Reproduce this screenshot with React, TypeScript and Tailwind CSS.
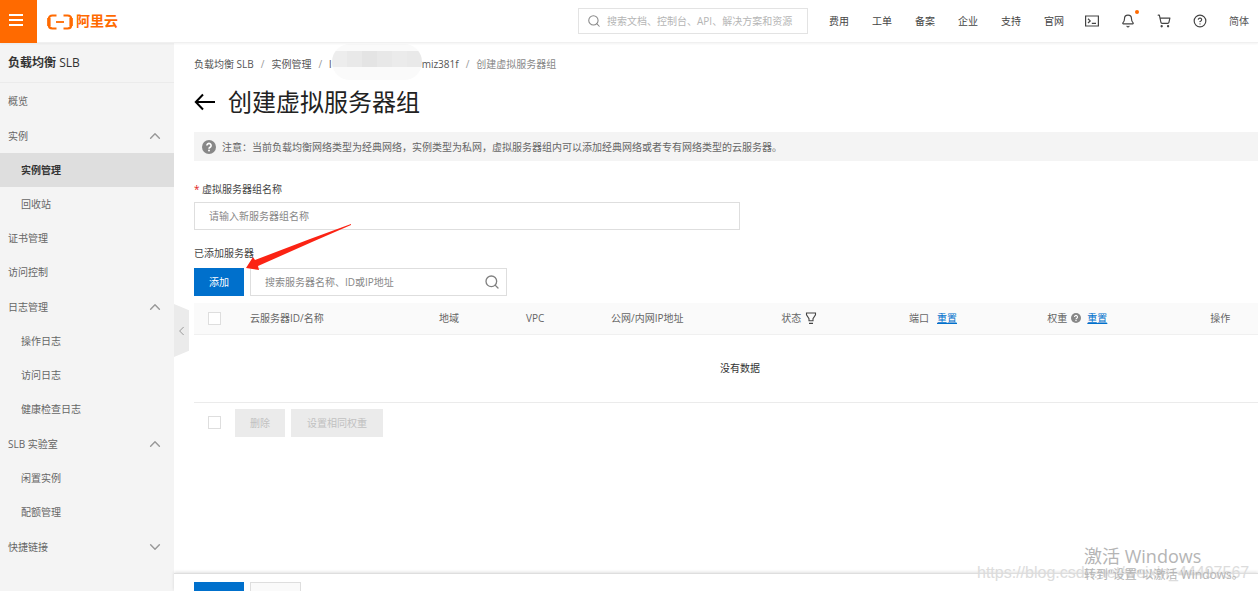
import { useState } from "react";
import { Bell, ChevronDown, ChevronLeft, ChevronUp, CircleHelp, Search, ShoppingCart } from "lucide-react";

const topLinks = ["费用", "工单", "备案", "企业", "支持", "官网"];

const menu = [
  { label: "概览" },
  { label: "实例", open: true, children: ["实例管理", "回收站"] },
  { label: "证书管理" },
  { label: "访问控制" },
  { label: "日志管理", open: true, children: ["操作日志", "访问日志", "健康检查日志"] },
  { label: "SLB 实验室", open: true, children: ["闲置实例", "配额管理"] },
  { label: "快捷链接", open: false, children: ["访问日志"] },
];

const checkboxClass = "block size-[13px] appearance-none border border-[#dedede] bg-white checked:bg-[#0070cc]";

function Logo() {
  return (
    <a href="#" aria-label="阿里云" className="ml-2.5 flex items-center gap-[3px] text-[#ff6a00]">
      <svg viewBox="0 0 26 16" className="mt-px h-4 w-[26px]" fill="none" stroke="currentColor">
        <path d="M9.5 1.5H5.4C3.1 1.5 1.8 2.8 1.8 5v6c0 2.2 1.3 3.5 3.6 3.5h4.1" strokeWidth="2.2" />
        <path d="M16.5 1.5h4.1c2.3 0 3.6 1.3 3.6 3.5v6c0 2.2-1.3 3.5-3.6 3.5h-4.1" strokeWidth="2.2" />
        <path d="M1.9 4v8M24.1 4v8" strokeWidth="3.4" />
        <path d="M9 8h8" strokeWidth="1.8" />
      </svg>
      <span className="text-sm font-bold">阿里云</span>
    </a>
  );
}

function HelpDot({ className }: { className: string }) {
  return (
    <svg viewBox="0 0 14 14" className={className}>
      <circle cx="7" cy="7" r="7" fill="#888" />
      <path d="M4.9 5.5a2.1 2.1 0 1 1 3.2 1.8c-.8.5-1.1.8-1.1 1.5" fill="none" stroke="#fff" strokeWidth="1.6" />
      <circle cx="7" cy="10.6" r="1" fill="#fff" />
    </svg>
  );
}

function Header() {
  return (
    <header className="relative z-10 flex h-[43px] shrink-0 items-center border-b border-[#f0f0f0] bg-white shadow-xs">
      <button aria-label="菜单" className="flex h-[43px] w-[37px] items-center justify-center bg-[#ff6a00]">
        <svg viewBox="0 0 14 14" className="mr-1.5 size-3.5" stroke="#fff" strokeWidth="2">
          <path d="M0 1h14M0 6h14M0 11h14" />
        </svg>
      </button>
      <Logo />
      <label className="ml-auto flex h-[26px] w-[230px] items-center gap-1.5 border border-[#e3e3e3] pl-2">
        <Search className="size-3.5 text-[#888]" strokeWidth={1.8} />
        <input
          aria-label="搜索"
          className="min-w-0 flex-1 outline-none placeholder:text-[#b5b5b5]"
          placeholder="搜索文档、控制台、API、解决方案和资源"
        />
      </label>
      <nav className="ml-[21px] flex items-center gap-[23px] text-[#444]">
        {topLinks.map((label) => (
          <a key={label} href="#">{label}</a>
        ))}
      </nav>
      <div className="ml-[21px] mr-[9px] flex items-center gap-[22px] text-[#444]">
        <button aria-label="Cloud Shell">
          <svg viewBox="0 0 14 14" className="size-3.5" fill="none" stroke="currentColor" strokeWidth="1.2">
            <path d="M.6 2h12.8v10H.6zM3 4.8l2.2 2.1L3 9M6.8 9.4H11" />
          </svg>
        </button>
        <button aria-label="消息" className="relative">
          <Bell className="size-3.5" strokeWidth={2} />
          <span className="absolute -right-1 -top-1 size-1 rounded-full bg-[#ff6a00]" />
        </button>
        <button aria-label="购物车">
          <ShoppingCart className="size-3.5" strokeWidth={2} />
        </button>
        <button aria-label="帮助">
          <CircleHelp className="size-3.5" strokeWidth={2} />
        </button>
        <a href="#" className="text-[#555]">简体</a>
      </div>
    </header>
  );
}

function Sidebar() {
  const [active, setActive] = useState("实例管理");
  const [open, setOpen] = useState(menu.filter((m) => m.open).map((m) => m.label));

  const toggle = (label: string) => {
    setOpen(open.includes(label) ? open.filter((l) => l !== label) : [...open, label]);
  };

  return (
    <aside className="w-[174px] shrink-0 overflow-hidden bg-[#f4f4f4] text-[#666]">
      <h2 className="flex h-10 items-center border-b border-[#ebebeb] pl-2 pt-px text-xs font-bold text-[#333]">
        负载均衡&nbsp;<span className="font-medium">SLB</span>
      </h2>
      <nav className="pt-px">
        {menu.map((item) => {
          if (!item.children) {
            return (
              <a key={item.label} href="#" className="flex h-[34px] items-center pl-2">{item.label}</a>
            );
          }
          const isOpen = open.includes(item.label);
          const Chevron = isOpen ? ChevronUp : ChevronDown;
          return (
            <div key={item.label}>
              <button
                className="flex h-[35px] w-full items-center justify-between pl-2 pr-3"
                onClick={() => toggle(item.label)}
              >
                {item.label}
                <Chevron className="size-3.5 scale-125 text-[#999]" strokeWidth={2} />
              </button>
              {isOpen && item.children.map((child) => (
                <a
                  key={child}
                  href="#"
                  onClick={() => setActive(child)}
                  className={`flex h-[34px] items-center pl-[21px] ${
                    active === child ? "bg-[#dedede] font-bold text-[#333]" : ""
                  }`}
                >
                  {child}
                </a>
              ))}
            </div>
          );
        })}
      </nav>
    </aside>
  );
}

function Breadcrumb() {
  return (
    <nav className="flex items-center gap-[7px] pt-[13px] leading-4 text-[#555]">
      <a href="#">负载均衡 SLB</a>
      <span className="text-[#999]">/</span>
      <a href="#">实例管理</a>
      <span className="text-[#999]">/</span>
      <a href="#" className="relative flex">
        <span>l</span>
        <span className="w-[90px]" />
        <span>miz381f</span>
        <span className="absolute -top-3 left-[3px] flex h-9 w-[90px] flex-col overflow-hidden rounded-[18px] bg-[#fafafa]">
          <span className="mt-[7px] flex h-4">
            <span className="flex-1 bg-[#ededed]" />
            <span className="flex-1 bg-[#e9e9e9]" />
            <span className="flex-1 bg-[#e4e4e4]" />
            <span className="flex-1 bg-[#e8e8e8]" />
            <span className="flex-1 bg-[#ebebeb]" />
            <span className="flex-1 bg-[#e9e9e9]" />
          </span>
        </span>
      </a>
      <span className="text-[#999]">/</span>
      <span className="text-[#888]">创建虚拟服务器组</span>
    </nav>
  );
}

function ServerTable() {
  return (
    <table className="mt-[7px] w-full table-fixed text-left text-[#666]">
      <thead>
        <tr className="h-[31px] border-b border-[#f0f0f0] bg-[#fafafa] [&>th]:font-normal">
          <th className="w-14 pl-3.5">
            <input type="checkbox" aria-label="全选" className={checkboxClass} />
          </th>
          <th className="w-[189px]">云服务器ID/名称</th>
          <th className="w-[87px]">地域</th>
          <th className="w-[8%]">VPC</th>
          <th className="w-[16%]">公网/内网IP地址</th>
          <th className="w-[12%]">
            <div className="flex items-center gap-1">
              状态
              <button aria-label="筛选状态">
                <svg viewBox="0 0 12 12" className="size-3" fill="none" stroke="#444" strokeWidth="1.1">
                  <path d="M1.5 1h9v1.8L8 6.6v2.2H4V6.6L1.5 2.8zM4 11.4h4" />
                </svg>
              </button>
            </div>
          </th>
          <th className="w-[13%]">
            <div className="flex items-center gap-2">
              端口
              <a href="#" className="text-[#0070cc] underline">重置</a>
            </div>
          </th>
          <th className="w-[163px]">
            <div className="flex items-center gap-1">
              权重
              <HelpDot className="size-2.5" />
              <a href="#" className="ml-0.5 text-[#0070cc] underline">重置</a>
            </div>
          </th>
          <th>操作</th>
        </tr>
      </thead>
      <tbody>
        <tr className="h-[68px] border-b border-[#ebebeb]">
          <td colSpan={9} className="pl-7 text-center text-[#333]">没有数据</td>
        </tr>
      </tbody>
    </table>
  );
}

function Watermarks() {
  return (
    <div className="pointer-events-none absolute bottom-0 right-2.5 z-20 h-[50px] w-[271px]">
      <p className="absolute left-0 top-[22px] whitespace-nowrap font-['Liberation_Sans',sans-serif] text-base leading-5 text-[#dcdcdc]">
        https://blog.csdn.net/weixin_44497567
      </p>
      <p className="absolute left-[107px] top-[3px] whitespace-nowrap text-lg leading-6 text-[#b5b5b5]">激活 Windows</p>
      <p className="absolute left-[107px] top-6 whitespace-nowrap text-xs leading-5 text-[#b5b5b5]">转到"设置"以激活 Windows。</p>
    </div>
  );
}

export default function App() {
  return (
    <div className="relative flex h-screen flex-col overflow-hidden bg-white font-['Open_Sans','Noto_Sans_CJK_SC',sans-serif] text-[10px] leading-4">
      <Header />
      <div className="flex min-h-0 flex-1">
        <Sidebar />
        <div className="relative flex min-w-0 flex-1 flex-col">
          <button
            aria-label="收起侧栏"
            className="absolute left-0 top-[261px] flex h-[53px] w-[15px] items-center justify-center bg-[#ebebeb] text-[#999] [clip-path:polygon(0_0,100%_12%,100%_88%,0_100%)]"
          >
            <ChevronLeft className="size-4" strokeWidth={1.6} />
          </button>

          <main className="min-h-0 flex-1 overflow-hidden pl-5">
            <Breadcrumb />
            <div className="mt-2.5 flex h-10 items-center gap-3">
              <a href="#" aria-label="返回" className="text-black">
                <svg viewBox="0 0 22 18" className="h-[18px] w-[22px]" fill="none" stroke="currentColor" strokeWidth="2">
                  <path d="M9 1.5L1.8 9 9 16.5M2 9h19" />
                </svg>
              </a>
              <h1 className="text-2xl text-[#222]">创建虚拟服务器组</h1>
            </div>

            <div className="mt-2.5 flex h-[29px] items-center gap-1.5 bg-[#f4f4f4] pl-2 text-[#666]">
              <HelpDot className="size-3.5" />
              注意：当前负载均衡网络类型为经典网络，实例类型为私网，虚拟服务器组内可以添加经典网络或者专有网络类型的云服务器。
            </div>

            <label htmlFor="group-name" className="mt-5 block text-[#444]">
              <span className="text-[#e02020]">*</span> 虚拟服务器组名称
            </label>
            <input
              id="group-name"
              className="mt-[5px] block h-7 w-[546px] border border-[#dedede] px-3.5 outline-none placeholder:text-[#888]"
              placeholder="请输入新服务器组名称"
            />

            <p className="mt-[15px] text-[#444]">已添加服务器</p>
            <div className="relative mt-[7px] flex gap-1.5">
              <button className="h-7 w-[50px] bg-[#0070cc] text-white">添加</button>
              <label className="flex h-7 w-[257px] items-center border border-[#dedede] pl-3.5 pr-1.5">
                <input
                  aria-label="搜索服务器"
                  className="min-w-0 flex-1 outline-none placeholder:text-[#888]"
                  placeholder="搜索服务器名称、ID或IP地址"
                />
                <Search className="size-4 text-[#808080]" strokeWidth={2} />
              </label>
              <svg viewBox="0 0 106 46" className="pointer-events-none absolute -top-11 left-[52px] h-[46px] w-[106px]">
                <path d="M105 0L64 15 9 36 7 33 0 44l13 2-1-4L66 18 105 1z" fill="#fb2314" />
              </svg>
            </div>

            <ServerTable />

            <div className="mt-1.5 flex items-center pl-3.5">
              <input type="checkbox" aria-label="全选" className={checkboxClass} />
              <button disabled className="ml-3.5 h-7 w-[50px] bg-[#ebebeb] text-[#c1c1c1]">删除</button>
              <button disabled className="ml-1.5 h-7 w-[92px] bg-[#ebebeb] text-[#c1c1c1]">设置相同权重</button>
            </div>
          </main>

          <footer className="flex h-[18px] shrink-0 items-start gap-1.5 overflow-hidden border-t border-[#dedede] pl-5 pt-2 shadow-[0_-1px_3px_rgba(0,0,0,0.12)]">
            <button aria-label="确定" className="h-7 w-[50px] shrink-0 bg-[#0070cc]" />
            <button aria-label="取消" className="h-7 w-[51px] shrink-0 border border-[#dedede] bg-[#fafafa]" />
          </footer>
        </div>
      </div>
      <Watermarks />
    </div>
  );
}
